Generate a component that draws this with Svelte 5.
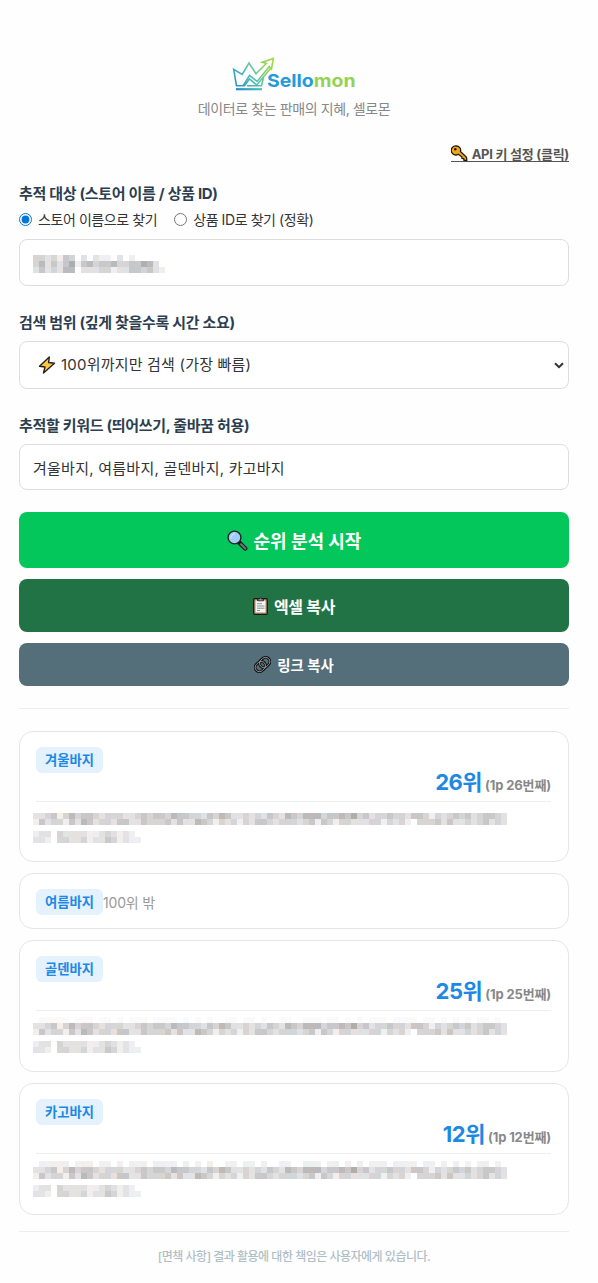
<script lang="ts">
  // one digit per mosaic cell, 0 = empty, 9 = darkest
  const storeMask = [
    '3323143020211020100000',
    '3524246145344533446520',
    '2423255022233122443421'
  ];
  const titleMask = [
    '2234135344323332234344354433243542232324325435553445463423343324431323434234432',
    '1423314254233244224333424225431323132443233323414313322233132310333424223234232'
  ];
  const faintRow = '0111110111011010111011110101010011011010011001110110101011101111011010101011010';
  const mallMask = ['122032222112321210', '221033223122431211'];

  const results = [
    { keyword: '겨울바지', rank: 26, faint: 0, productHeight: 41 },
    { keyword: '여름바지', rank: null, faint: 0, productHeight: 0 },
    { keyword: '골덴바지', rank: 25, faint: 0.3, productHeight: 42 },
    { keyword: '카고바지', rank: 12, faint: 0.9, productHeight: 43 }
  ];

  const tints = [
    [2, 0, -2],
    [-3, 0, 3],
    [0, 1, 0],
    [4, -1, -3],
    [0, 0, 4]
  ];

  const cellColor = (digit: string, x: number, y: number) => {
    const v = 252 - Number(digit) * 13;
    const tint = tints[(x * 3 + y * 2 + Number(digit)) % tints.length];
    return `rgb(${tint.map((t) => Math.min(255, v + t)).join(', ')})`;
  };

  let searchType = $state('store');
  let depth = $state('100');
</script>

{#snippet mosaic(rows: string[], opacity = 1)}
  <svg width={rows[0].length * 6} height={rows.length * 6} {opacity} shape-rendering="crispEdges">
    {#each rows as row, y}
      {#each row.split('') as digit, x}
        {#if digit !== '0'}
          <rect x={x * 6} y={y * 6} width="6" height="6" fill={cellColor(digit, x, y)} />
        {/if}
      {/each}
    {/each}
  </svg>
{/snippet}

<main class="container">
  <header>
    <div class="logo">
      <svg width="44" height="36" viewBox="0 0 44 36" fill="none">
        <defs>
          <linearGradient id="crown" gradientUnits="userSpaceOnUse" x1="2" y1="33" x2="42" y2="2">
            <stop offset="0" stop-color="#1f86d2" />
            <stop offset="0.45" stop-color="#53c3b4" />
            <stop offset="0.75" stop-color="#8ed35c" />
            <stop offset="1" stop-color="#a5dd3e" />
          </linearGradient>
        </defs>
        <g stroke="url(#crown)" stroke-width="1.6">
          <path d="M13 28.800H4.500L1.700 12.300 10.200 17.500 17 6 24 16.800 34.300 6.500 30.300 5.300 41.300 1.500 39.500 12 37.300 9.500 25.200 24.500 17.500 18.500 11.300 28.500" />
          <path d="M12.500 28.800 17.500 22 24.800 28 38.500 11.500M15 28.800H29.500L31.500 20.500" />
          <path d="M4 32.200H30" stroke-width="2.200" />
        </g>
      </svg>
      <span class="brand">Sello<em>mon</em></span>
    </div>
    <p class="tagline">데이터로 찾는 판매의 지혜, 셀로몬</p>
  </header>

  <a class="api-link" href="#api">
    <svg width="17" height="17" viewBox="0 0 17 17">
      <path d="M5.300 1a4.300 4.300 0 0 1 4.200 5.500l6 5.800.3 3.200-2.800-.2-.3-1.700-1.700-.2-.2-1.600-3.600-2.600A4.500 4.500 0 1 1 5.300 1Z" fill="#f2a51b" stroke="#221a0b" stroke-width="1.300" />
      <circle cx="4.300" cy="4.300" r="1.200" fill="#221a0b" />
    </svg>
    <span>API 키 설정 (클릭)</span>
  </a>

  <section class="field">
    <h2>추적 대상 (스토어 이름 / 상품 ID)</h2>
    <div class="radios">
      <label><input type="radio" bind:group={searchType} value="store" />스토어 이름으로 찾기</label>
      <label><input type="radio" bind:group={searchType} value="product" />상품 ID로 찾기 (정확)</label>
    </div>
    <div class="control store">{@render mosaic(storeMask)}</div>
  </section>

  <section class="field">
    <h2>검색 범위 (깊게 찾을수록 시간 소요)</h2>
    <button class="control select" onclick={() => (depth = '100')}>
      <svg width="18" height="18" viewBox="0 0 17 18">
        <path d="M10.800 1 1 10.200l5.500.8L5 17l11-9.700-5.900-.8Z" fill="#ffc83d" stroke="#222" stroke-width="1.400" stroke-linejoin="round" />
      </svg>
      <span class="range">{depth}위까지만 검색 (가장 빠름)</span>
      <svg class="arrow" width="10" height="7" viewBox="0 0 10 7" fill="none">
        <path d="m1 1.200 4 4 4-4" stroke="#333" stroke-width="2" />
      </svg>
    </button>
  </section>

  <section class="field">
    <h2>추적할 키워드 (띄어쓰기, 줄바꿈 허용)</h2>
    <div class="control keywords"><span>겨울바지, 여름바지, 골덴바지, 카고바지</span></div>
  </section>

  <div class="actions">
    <button class="start">
      <svg width="21" height="21" viewBox="0 0 21 21">
        <path d="m12 12.300 6.200 6.200" stroke="#151a1d" stroke-width="4.500" stroke-linecap="round" />
        <path d="m14 14.300 4.300 4.200" stroke="#687581" stroke-width="2.200" stroke-linecap="round" />
        <circle cx="7.500" cy="7.500" r="6.400" fill="#a0cdf3" stroke="#20262b" stroke-width="1.400" />
        <path d="M4 8a4 4 0 0 1 4-4" stroke="#c5e3fb" stroke-width="1.300" fill="none" />
      </svg>
      <span>순위 분석 시작</span>
    </button>
    <button class="excel">
      <svg width="15" height="18" viewBox="0 0 15 18">
        <rect x=".7" y="1.700" width="13.600" height="15.600" rx="1" fill="#b88b66" stroke="#181818" stroke-width="1.200" />
        <path d="M2.500 3.500h10v12h-10z" fill="#f5f5f2" />
        <path d="M4.500 3.800V2h1.700L7.500.7 8.800 2h1.700v1.800Z" fill="#888" stroke="#222" stroke-width=".8" />
        <path d="M4 6.700h5M4 9h7.500M4 11.200h7.500M4 13.500h3" stroke="#8b9296" />
      </svg>
      <span>엑셀 복사</span>
    </button>
    <button class="link">
      <svg width="17" height="17" viewBox="0 0 17 17" fill="none">
        <g transform="rotate(-43 8.500 8.500)">
          <rect x="0" y="4.200" width="11" height="8.600" rx="4.300" stroke="#111" stroke-width="2.800" />
          <rect x="6" y="4.200" width="11" height="8.600" rx="4.300" stroke="#111" stroke-width="2.800" />
          <rect x="0" y="4.200" width="11" height="8.600" rx="4.300" stroke="#a3abb0" stroke-width=".8" />
          <rect x="6" y="4.200" width="11" height="8.600" rx="4.300" stroke="#a3abb0" stroke-width=".8" />
        </g>
      </svg>
      <span>링크 복사</span>
    </button>
  </div>

  <div class="results">
    {#each results as item}
      <article class:out={!item.rank}>
        <span class="badge"><b>{item.keyword}</b></span>
        {#if item.rank}
          <div class="rank">
            <strong>{item.rank}위</strong>
            <small>(1p {item.rank}번째)</small>
          </div>
          <div class="product" style="height: {item.productHeight}px">
            {#if item.faint}
              {@render mosaic([faintRow], item.faint)}
            {/if}
            {@render mosaic(titleMask)}
            <div class="mall">{@render mosaic(mallMask)}</div>
          </div>
        {:else}
          <span class="none">100위 밖</span>
        {/if}
      </article>
    {/each}
  </div>

  <footer>[면책 사항] 결과 활용에 대한 책임은 사용자에게 있습니다.</footer>
</main>

<style>
  :global(body) {
    background: #fefefe;
  }

  .container {
    box-sizing: border-box;
    width: 598px;
    height: 1283px;
    padding: 57px 29px 0 19px;
    font-family: Inter, 'Noto Sans CJK KR', sans-serif;
    color: #333;
    white-space: nowrap;
    overflow: hidden;
  }

  svg {
    flex: none;
    display: block;
  }

  header {
    display: flex;
    flex-direction: column;
    align-items: center;
    height: 88px;
  }

  .logo {
    display: flex;
    width: 124px;
    height: 37px;
  }

  .brand {
    margin: 12px 0 0 -9px;
    font: 700 18px/23px Inter, sans-serif;
    color: #239bd7;
    transform: scaleX(1.08);
    transform-origin: left;
  }

  .brand em {
    font-style: normal;
    color: #96d252;
  }

  .tagline {
    margin: 4px 0 0;
    font-size: 14px;
    line-height: 22px;
    letter-spacing: -0.4px;
    color: #888;
  }

  .api-link {
    display: flex;
    align-items: center;
    justify-content: flex-end;
    gap: 4px;
    width: max-content;
    height: 16px;
    margin-left: auto;
    border-bottom: 1px solid #555;
    font-size: 13px;
    font-weight: 700;
    letter-spacing: -0.25px;
    color: #555;
    text-decoration: none;
  }

  .field h2 {
    margin: 0;
    height: 22px;
    font-size: 15px;
    line-height: 22px;
    font-weight: 700;
    letter-spacing: -0.3px;
    color: #2c3e50;
  }

  .field {
    margin-top: 26px;
  }

  .api-link + .field {
    margin-top: 21px;
  }

  .radios {
    display: flex;
    gap: 17px;
    height: 22px;
    margin: 3px 0 9px;
    font-size: 14px;
    letter-spacing: -0.42px;
  }

  .radios label {
    display: flex;
    align-items: center;
  }

  .radios input {
    width: 13px;
    height: 13px;
    margin: 0 6px 0 0;
    accent-color: #0075d7;
  }

  .control {
    box-sizing: border-box;
    display: flex;
    align-items: center;
    width: 100%;
    height: 47px;
    padding: 0 13px;
    border: 1px solid #ddd;
    border-radius: 8px;
    background: #fff;
    font: inherit;
    font-size: 15px;
    color: #333;
    letter-spacing: 0.25px;
  }

  .store {
    padding-top: 3px;
  }

  .select {
    height: 48px;
    margin-top: 7px;
    padding: 0 4px 0 18px;
  }

  .range {
    margin-left: 5px;
    padding-bottom: 3px;
    letter-spacing: 0.2px;
  }

  .arrow {
    margin-left: auto;
  }

  .keywords {
    height: 46px;
    margin-top: 7px;
  }

  .actions {
    display: flex;
    flex-direction: column;
    gap: 11px;
    margin-top: 22px;
    padding-bottom: 22px;
    border-bottom: 1px solid #eee;
  }

  .actions button {
    display: flex;
    align-items: center;
    justify-content: center;
    gap: 6px;
    padding: 0;
    border: 0;
    border-radius: 8px;
    font-family: inherit;
    font-weight: 700;
    color: #fff;
  }

  .actions .start {
    height: 56px;
    background: #03c75a;
    font-size: 18px;
  }

  .actions .excel {
    height: 53px;
    background: #217346;
    font-size: 16px;
    letter-spacing: -0.3px;
  }

  .actions .link {
    height: 43px;
    background: #546e7a;
    font-size: 14.4px;
  }

  .results {
    display: flex;
    flex-direction: column;
    gap: 11px;
    margin-top: 22px;
    padding-bottom: 16px;
    border-bottom: 1px solid #eee;
  }

  article {
    box-sizing: border-box;
    height: 132px;
    padding: 15px 17px 0 16px;
    border: 1px solid #e5e5e8;
    border-radius: 14px;
    background: #fff;
  }

  article:first-child {
    height: 131px;
  }

  article.out {
    display: flex;
    height: 56px;
  }

  .badge {
    display: flex;
    align-items: center;
    justify-content: center;
    width: 67px;
    height: 26px;
    border-radius: 6px;
    background: #e3f2fd;
    font-size: 13.3px;
    color: #1e88e5;
  }

  .badge b {
    margin-top: -1px;
  }

  .rank {
    display: flex;
    align-items: baseline;
    justify-content: flex-end;
    gap: 3px;
    height: 28px;
    border-bottom: 1px solid #eee;
    line-height: 18px;
  }

  .rank strong {
    font-size: 22px;
    letter-spacing: -0.5px;
    color: #1e88e5;
  }

  .rank small {
    font-size: 13px;
    font-weight: 700;
    letter-spacing: -0.15px;
    color: #888;
  }

  .product {
    display: flex;
    flex-direction: column;
    justify-content: flex-end;
    margin-left: -3px;
  }

  .mall {
    margin-top: 6px;
  }

  .none {
    font-size: 14px;
    line-height: 27px;
    letter-spacing: -0.2px;
    color: #999;
  }

  footer {
    margin-top: 15px;
    font-size: 12px;
    font-weight: 500;
    line-height: 20px;
    letter-spacing: -0.5px;
    text-align: center;
    color: #b0bec5;
  }
</style>
